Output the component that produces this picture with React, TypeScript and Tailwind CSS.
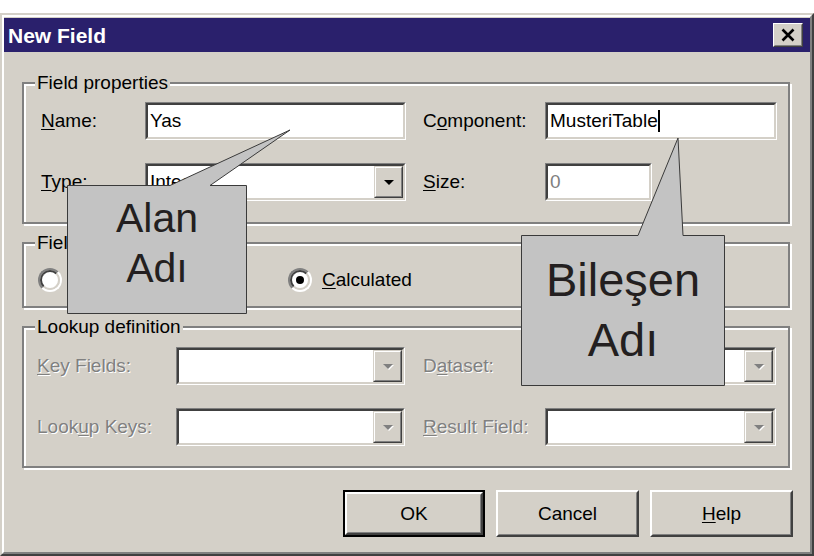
import React from "react";

const font = "font-['Liberation_Sans',Arial,sans-serif]";

function Sunken({ className, children }: { className: string; children?: React.ReactNode }) {
  return (
    <div className={`${className} h-[38px] border border-t-[#808080] border-l-[#808080] border-b-white border-r-white`}>
      <div className="h-full flex items-stretch bg-white border-2 border-t-[#404040] border-l-[#404040] border-b-[#d4d0c8] border-r-[#d4d0c8]">
        {children}
      </div>
    </div>
  );
}

function Arrow({ disabled }: { disabled?: boolean }) {
  return (
    <div className="w-[29px] shrink-0 bg-[#d4d0c8] border border-t-[#d4d0c8] border-l-[#d4d0c8] border-b-[#404040] border-r-[#404040]">
      <div className="h-full flex items-center justify-center border border-t-white border-l-white border-b-[#808080] border-r-[#808080]">
        <svg width="14" height="9" viewBox="0 0 14 9">
          {disabled && <polygon points="3,3 13,3 8,8" fill="#ffffff" />}
          <polygon points="2,2 12,2 7,7" fill={disabled ? "#808080" : "#000000"} />
        </svg>
      </div>
    </div>
  );
}

function Combo({ className, text, disabled }: { className: string; text?: string; disabled?: boolean }) {
  return (
    <Sunken className={className}>
      <div className="flex-1 flex items-center pl-[2px] overflow-hidden whitespace-nowrap">{text}</div>
      <Arrow disabled={disabled} />
    </Sunken>
  );
}

function Group({ label, className, children }: { label: string; className: string; children: React.ReactNode }) {
  return (
    <div className={`relative w-[768px] border-2 border-[#808080] shadow-[2px_2px_0_#fff,inset_2px_2px_0_#fff] ${className}`}>
      <span className="absolute left-[11px] -top-[12px] px-[2px] bg-[#d4d0c8] leading-[22px]">{label}</span>
      {children}
    </div>
  );
}

function Btn({ children, isDefault }: { children: React.ReactNode; isDefault?: boolean }) {
  const inner = (
    <div className="h-full border-2 border-t-white border-l-white border-b-[#404040] border-r-[#404040]">
      <div className="h-full flex items-center justify-center border border-t-[#d4d0c8] border-l-[#d4d0c8] border-b-[#808080] border-r-[#808080]">
        {children}
      </div>
    </div>
  );
  return isDefault ? (
    <div className="w-[142px] h-[47px] border-2 border-black">{inner}</div>
  ) : (
    <div className="w-[143px] h-[47px]">{inner}</div>
  );
}

const dis = "text-[#808080] [text-shadow:1px_1px_0_#fff]";

export default function App() {
  return (
    <div className={`relative w-[814px] h-[556px] bg-white pt-[13px] overflow-hidden text-[19px] text-black ${font}`}>
      {/* window frame */}
      <div className="h-[543px] border-2 border-t-[#d4d0c8] border-l-[#d4d0c8] border-b-[#404040] border-r-[#404040]">
        <div className="h-full flex flex-col bg-[#d4d0c8] pt-[1px] border-2 border-t-white border-l-white border-b-[#808080] border-r-[#808080]">
          {/* title bar */}
          <div className="h-[34px] shrink-0 flex items-center justify-between bg-[#2a206c] pl-[4px] pr-[7px]">
            <span className="text-white font-bold text-[21px] leading-none">New Field</span>
            <div className="w-[30px] h-[24px] border border-t-white border-l-white border-b-[#404040] border-r-[#404040] bg-[#d4d0c8]">
              <div className="h-full flex items-center justify-center border border-t-[#d4d0c8] border-l-[#d4d0c8] border-b-[#808080] border-r-[#808080]">
                <svg width="14" height="14" viewBox="0 0 14 14">
                  <path d="M1.5 1.5 L12.5 12.5 M12.5 1.5 L1.5 12.5" stroke="#000" strokeWidth="2.6" />
                </svg>
              </div>
            </div>
          </div>

          {/* body */}
          <div className="flex-1 flex flex-col pl-[18px] pr-[17px] leading-[22px]">
            <Group label="Field properties" className="mt-[30px] pt-[18px] pb-[21px] pl-[17px]">
              <div className="flex items-center">
                <span className="w-[104px]"><span className="underline underline-offset-2">N</span>ame:</span>
                <Sunken className="w-[261px]">
                  <div className="flex items-center pl-[2px]">Yas</div>
                </Sunken>
                <span className="w-[139px] pl-[17px]">C<span className="underline underline-offset-2">o</span>mponent:</span>
                <Sunken className="w-[232px]">
                  <div className="flex items-center pl-[2px]">
                    MusteriTable<span className="inline-block w-[2px] h-[22px] bg-black" />
                  </div>
                </Sunken>
              </div>
              <div className="flex items-center mt-[23px]">
                <span className="w-[104px]"><span className="underline underline-offset-2">T</span>ype:</span>
                <Combo className="w-[261px]" text="Integer" />
                <span className="w-[139px] pl-[17px]"><span className="underline underline-offset-2">S</span>ize:</span>
                <Sunken className="w-[107px]">
                  <div className="flex items-center pl-[2px] text-[#808080]">0</div>
                </Sunken>
              </div>
            </Group>

            <Group label="Field type" className="mt-[18px] pt-[24px] pb-[14px] pl-[14px]">
              <div className="flex items-center h-[24px]">
                <div className="w-[250px] flex items-center gap-[10px]">
                  <div className="w-[24px] h-[24px] rounded-full border-2 border-t-[#808080] border-l-[#808080] border-b-white border-r-white">
                    <div className="h-full rounded-full bg-white border-2 border-t-[#404040] border-l-[#404040] border-b-[#d4d0c8] border-r-[#d4d0c8]" />
                  </div>
                  <span><span className="underline underline-offset-2">D</span>ata</span>
                </div>
                <div className="flex items-center gap-[10px]">
                  <div className="w-[24px] h-[24px] rounded-full border-2 border-t-[#808080] border-l-[#808080] border-b-white border-r-white">
                    <div className="h-full flex items-center justify-center rounded-full bg-white border-2 border-t-[#404040] border-l-[#404040] border-b-[#d4d0c8] border-r-[#d4d0c8]">
                      <div className="w-[8px] h-[8px] rounded-full bg-black" />
                    </div>
                  </div>
                  <span><span className="underline underline-offset-2">C</span>alculated</span>
                </div>
              </div>
            </Group>

            <Group label="Lookup definition" className="mt-[18px] pt-[19px] pb-[20px] pl-[13px]">
              <div className="flex items-center">
                <span className={`w-[139px] ${dis}`}><span className="underline underline-offset-2">K</span>ey Fields:</span>
                <Combo className="w-[229px]" disabled />
                <span className={`w-[140px] pl-[18px] ${dis}`}>D<span className="underline underline-offset-2">a</span>taset:</span>
                <Combo className="w-[231px]" disabled />
              </div>
              <div className="flex items-center mt-[23px]">
                <span className={`w-[139px] ${dis}`}>Look<span className="underline underline-offset-2">u</span>p Keys:</span>
                <Combo className="w-[229px]" disabled />
                <span className={`w-[140px] pl-[18px] ${dis}`}><span className="underline underline-offset-2">R</span>esult Field:</span>
                <Combo className="w-[231px]" disabled />
              </div>
            </Group>

            <div className="mt-[22px] flex justify-end gap-[11px]">
              <Btn isDefault>OK</Btn>
              <Btn>Cancel</Btn>
              <Btn><span><span className="underline underline-offset-2">H</span>elp</span></Btn>
            </div>
          </div>
        </div>
      </div>

      {/* callouts */}
      <svg className="absolute left-0 top-0 pointer-events-none" width="814" height="556" viewBox="0 0 814 556">
        <polygon
          points="67.5,185.5 170,185.5 290,130 210,185.5 246.5,185.5 246.5,313.5 67.5,313.5"
          fill="#c3c3c3"
          stroke="#3a3a3a"
          strokeWidth="1"
        />
        <polygon
          points="521.5,235.5 638,235.5 678,138 683,235.5 724.5,235.5 724.5,385.5 521.5,385.5"
          fill="#c3c3c3"
          stroke="#3a3a3a"
          strokeWidth="1"
        />
      </svg>
      <div className="absolute left-[67px] top-[193px] w-[180px] flex flex-col items-center text-[41px] leading-[50px] text-[#231f20]">
        <span>Alan</span>
        <span>Adı</span>
      </div>
      <div className="absolute left-[521px] top-[250px] w-[204px] flex flex-col items-center text-[47px] leading-[60px] text-[#231f20]">
        <span>Bileşen</span>
        <span>Adı</span>
      </div>
    </div>
  );
}
